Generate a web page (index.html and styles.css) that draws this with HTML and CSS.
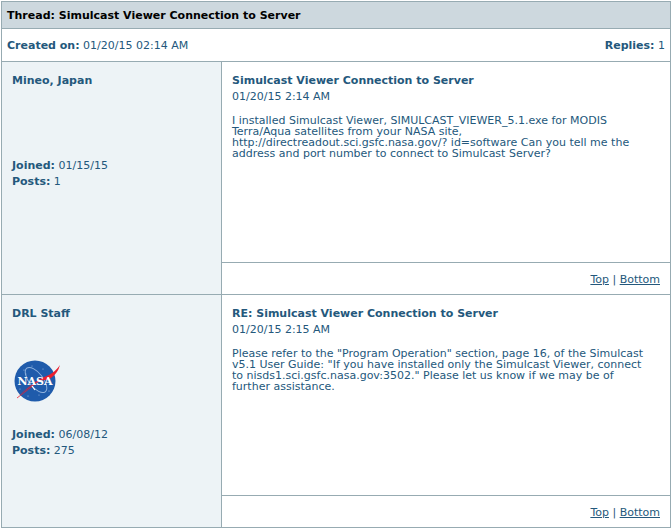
FILE: index.html
```
<!DOCTYPE html>
<html lang="en">
<head>
    <meta charset="UTF-8">
    <meta name="viewport" content="width=device-width, initial-scale=1.0">
    <title>Thread: Simulcast Viewer Connection to Server</title>
    <link rel="stylesheet" href="styles.css">
</head>
<body>
    <main class="thread" id="top">
        <h1 class="thread-title">Thread: Simulcast Viewer Connection to Server</h1>
        <div class="thread-info">
            <span><b>Created on:</b> 01/20/15 02:14 AM</span>
            <span><b>Replies:</b> 1</span>
        </div>

        <article class="post">
            <div class="author">
                <b>Mineo, Japan</b>
                <div class="avatar"></div>
                <div><b>Joined:</b> 01/15/15</div>
                <div><b>Posts:</b> 1</div>
            </div>
            <div class="content">
                <div class="message">
                    <h2>Simulcast Viewer Connection to Server</h2>
                    <div>01/20/15 2:14 AM</div>
                    <p>I installed Simulcast Viewer, SIMULCAST_VIEWER_5.1.exe for MODIS<br>
                    Terra/Aqua satellites from your NASA site,<br>
                    http://directreadout.sci.gsfc.nasa.gov/? id=software Can you tell me the<br>
                    address and port number to connect to Simulcast Server?</p>
                </div>
                <div class="post-links">
                    <a href="#top">Top</a> | <a href="#bottom">Bottom</a>
                </div>
            </div>
        </article>

        <article class="post" id="bottom">
            <div class="author">
                <b>DRL Staff</b>
                <div class="avatar avatar-image">
                    <svg width="50" height="45" viewBox="0 0 50 45" role="img" aria-label="NASA">
                        <circle cx="23" cy="23" r="20.5" fill="#1f5bab"/>
                        <g fill="#a9c4e6">
                            <circle cx="12" cy="12" r=".6"/>
                            <circle cx="20" cy="8" r=".5"/>
                            <circle cx="31" cy="11" r=".5"/>
                            <circle cx="8" cy="31" r=".5"/>
                            <circle cx="16" cy="38" r=".6"/>
                            <circle cx="27" cy="37" r=".5"/>
                            <circle cx="37" cy="33" r=".6"/>
                            <circle cx="14" cy="16" r=".5"/>
                        </g>
                        <ellipse cx="24" cy="22" rx="7" ry="15" transform="rotate(-38 24 22)" fill="none" stroke="#8fb2de" stroke-width="1"/>
                        <path d="M6 38 Q15 30 25 23 Q31 19 37 17 Q44 13 48 7 Q46 15 39 20 Q34 23 30 22 Q20 27 6 38Z" fill="#ea1f2e"/>
                        <path d="M5 40 L22 27" stroke="#ea1f2e" stroke-width=".8"/>
                        <text class="logo-text" x="23" y="27" text-anchor="middle">NASA</text>
                        <path d="M20 28 L23 32" stroke="#fff" stroke-width="1.2"/>
                    </svg>
                </div>
                <div><b>Joined:</b> 06/08/12</div>
                <div><b>Posts:</b> 275</div>
            </div>
            <div class="content">
                <div class="message">
                    <h2>RE: Simulcast Viewer Connection to Server</h2>
                    <div>01/20/15 2:15 AM</div>
                    <p>Please refer to the "Program Operation" section, page 16, of the Simulcast<br>
                    v5.1 User Guide: "If you have installed only the Simulcast Viewer, connect<br>
                    to nisds1.sci.gsfc.nasa.gov:3502." Please let us know if we may be of<br>
                    further assistance.</p>
                </div>
                <div class="post-links">
                    <a href="#top">Top</a> | <a href="#bottom">Bottom</a>
                </div>
            </div>
        </article>
    </main>
</body>
</html>
```
FILE: styles.css
```
body {
    margin: 1px;
    font-family: Verdana, "DejaVu Sans", sans-serif;
    font-size: 11px;
    line-height: 16px;
    color: #24587c;
    background-color: #fff;
}
.thread {
    border: 1px solid #97abb2;
}
.thread-title {
    margin: 0;
    padding: 6px 5px 4px;
    font-size: 11px;
    color: #000;
    background-color: #cdd8de;
}
.thread-info {
    display: flex;
    justify-content: space-between;
    padding: 9px 5px 7px;
    border-top: 1px solid #97abb2;
}
.post {
    display: flex;
    border-top: 1px solid #97abb2;
}
.author {
    box-sizing: border-box;
    flex: 0 0 220px;
    padding: 11px 10px 10px;
    border-right: 1px solid #97abb2;
    background-color: #edf3f6;
}
.avatar {
    height: 69px;
}
.avatar-image {
    box-sizing: border-box;
    height: 105px;
    padding-top: 36px;
}
.avatar svg {
    display: block;
}
.logo-text {
    font-family: "DejaVu Serif", serif;
    font-size: 11px;
    font-weight: bold;
    fill: #fff;
}
.content {
    flex: 1;
    min-width: 0;
}
.message {
    box-sizing: border-box;
    min-height: 200px;
    padding: 11px 10px 10px;
}
.message h2 {
    margin: 0;
    font-size: 11px;
}
.message p {
    margin: 10px 0 0;
    line-height: 11px;
    white-space: nowrap;
}
.post-links {
    padding: 9px 10px 6px;
    border-top: 1px solid #97abb2;
    text-align: right;
}
.post-links a {
    color: #24587c;
}
```
